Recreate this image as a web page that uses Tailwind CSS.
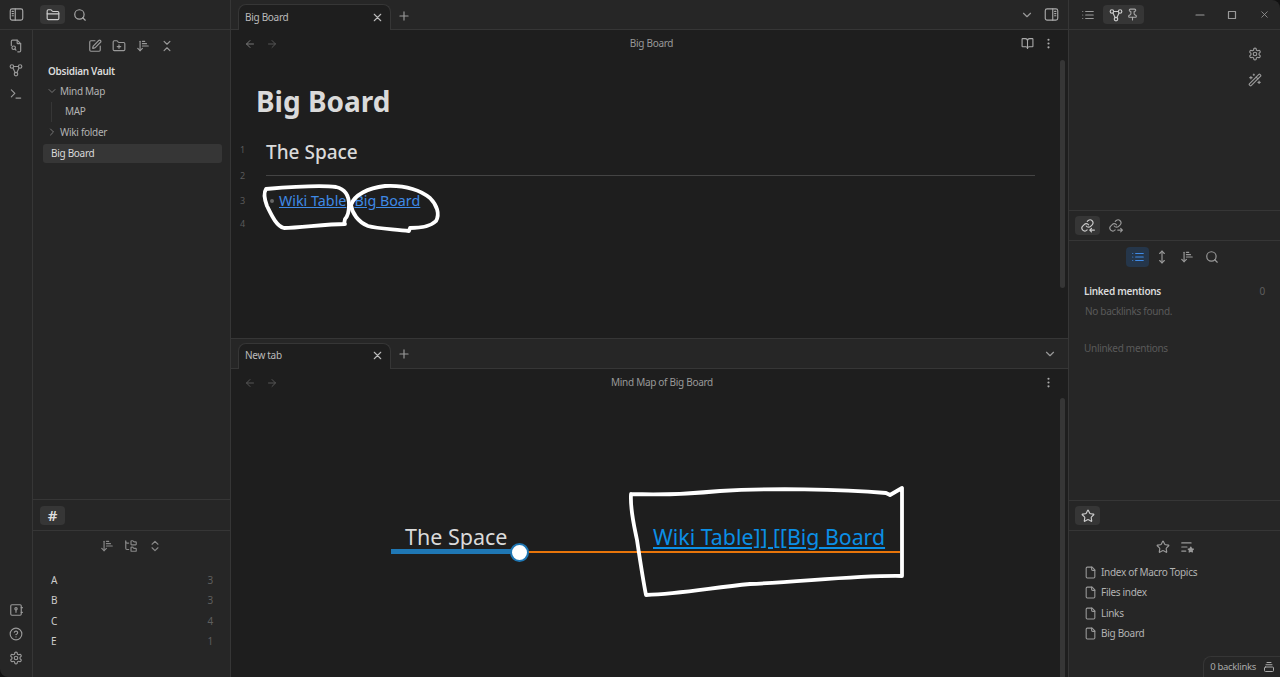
<!DOCTYPE html>
<html lang="en">
<head>
    <meta charset="UTF-8">
    <title>Big Board - Obsidian Vault</title>
    <script src="https://cdn.jsdelivr.net/npm/@tailwindcss/browser@4"></script>
</head>
<body class="bg-[#111] overflow-hidden font-['Noto_Sans','Open_Sans',sans-serif]">
    <svg class="hidden">
        <symbol id="i-sidebar" viewBox="0 0 24 24"><rect x="2" y="3" width="20" height="18" rx="3"/><path d="M10 3v18M5 7h2M5 10.500h2M5 14h2"/></symbol>
        <symbol id="i-sidebar-r" viewBox="0 0 24 24"><rect x="2" y="3" width="20" height="18" rx="3"/><path d="M14 3v18M17 7h2M17 10.500h2M17 14h2"/></symbol>
        <symbol id="i-folder" viewBox="0 0 24 24"><path d="M20 20a2 2 0 0 0 2-2V8a2 2 0 0 0-2-2h-7.900a2 2 0 0 1-1.690-.9L9.600 3.900A2 2 0 0 0 7.930 3H4a2 2 0 0 0-2 2v13a2 2 0 0 0 2 2Z"/><path d="M2 10h20"/></symbol>
        <symbol id="i-search" viewBox="0 0 24 24"><circle cx="11" cy="11" r="8"/><path d="m21 21-4.300-4.300"/></symbol>
        <symbol id="i-file-search" viewBox="0 0 24 24"><path d="M14 2v5a1 1 0 0 0 1 1h5"/><path d="M9 2h5l6 6v12a2 2 0 0 1-2 2h-3M4 11V4a2 2 0 0 1 2-2h3"/><circle cx="8" cy="15" r="3"/><path d="m12 19-1.800-1.800"/></symbol>
        <symbol id="i-graph" viewBox="0 0 24 24"><circle cx="5" cy="6" r="3"/><circle cx="19" cy="6" r="3"/><circle cx="12" cy="19" r="3"/><path d="M7 9l3.500 7.500M17 9l-3.500 7.500M8 6h8"/></symbol>
        <symbol id="i-terminal" viewBox="0 0 24 24"><path d="m4 17 6-6-6-6"/><path d="M12 19h8"/></symbol>
        <symbol id="i-pen" viewBox="0 0 24 24"><path d="M12 3H5a2 2 0 0 0-2 2v14a2 2 0 0 0 2 2h14a2 2 0 0 0 2-2v-7"/><path d="M18.375 2.625a1 1 0 0 1 3 3l-9.013 9.014a2 2 0 0 1-.853.505l-2.873.84a.5.5 0 0 1-.62-.62l.84-2.873a2 2 0 0 1 .506-.852z"/></symbol>
        <symbol id="i-folder-plus" viewBox="0 0 24 24"><path d="M12 10v6M9 13h6"/><path d="M20 20a2 2 0 0 0 2-2V8a2 2 0 0 0-2-2h-7.900a2 2 0 0 1-1.690-.9L9.600 3.900A2 2 0 0 0 7.930 3H4a2 2 0 0 0-2 2v13a2 2 0 0 0 2 2Z"/></symbol>
        <symbol id="i-sort" viewBox="0 0 24 24"><path d="m3 16 4 4 4-4"/><path d="M7 20V4"/><path d="M11 4h4M11 8h7M11 12h10"/></symbol>
        <symbol id="i-collapse" viewBox="0 0 24 24"><path d="m7 20 5-5 5 5"/><path d="m7 4 5 5 5-5"/></symbol>
        <symbol id="i-expand" viewBox="0 0 24 24"><path d="m7 15 5 5 5-5"/><path d="m7 9 5-5 5 5"/></symbol>
        <symbol id="i-folder-tree" viewBox="0 0 24 24"><path d="M20 10a1 1 0 0 0 1-1V6a1 1 0 0 0-1-1h-2.500a1 1 0 0 1-.8-.4l-.9-1.200A1 1 0 0 0 15 3h-2a1 1 0 0 0-1 1v5a1 1 0 0 0 1 1Z"/><path d="M20 21a1 1 0 0 0 1-1v-3a1 1 0 0 0-1-1h-2.900a1 1 0 0 1-.88-.55l-.42-.85a1 1 0 0 0-.92-.6H13a1 1 0 0 0-1 1v5a1 1 0 0 0 1 1Z"/><path d="M3 5a2 2 0 0 0 2 2h3"/><path d="M3 3v13a2 2 0 0 0 2 2h3"/></symbol>
        <symbol id="i-vault" viewBox="0 0 24 24"><rect x="3" y="3" width="18" height="18" rx="2"/><circle cx="12" cy="10" r="2"/><path d="M12 12v4M21 8h2M21 16h2"/></symbol>
        <symbol id="i-help" viewBox="0 0 24 24"><circle cx="12" cy="12" r="10"/><path d="M9.090 9a3 3 0 0 1 5.830 1c0 2-3 3-3 3"/><path d="M12 17h.01"/></symbol>
        <symbol id="i-gear" viewBox="0 0 24 24"><path d="M12.220 2h-.44a2 2 0 0 0-2 2v.18a2 2 0 0 1-1 1.730l-.43.25a2 2 0 0 1-2 0l-.15-.08a2 2 0 0 0-2.730.73l-.22.38a2 2 0 0 0 .73 2.730l.15.1a2 2 0 0 1 1 1.720v.51a2 2 0 0 1-1 1.740l-.15.09a2 2 0 0 0-.73 2.730l.22.38a2 2 0 0 0 2.730.73l.15-.08a2 2 0 0 1 2 0l.43.25a2 2 0 0 1 1 1.730V20a2 2 0 0 0 2 2h.44a2 2 0 0 0 2-2v-.18a2 2 0 0 1 1-1.730l.43-.25a2 2 0 0 1 2 0l.15.08a2 2 0 0 0 2.730-.73l.22-.39a2 2 0 0 0-.73-2.730l-.15-.08a2 2 0 0 1-1-1.740v-.5a2 2 0 0 1 1-1.740l.15-.09a2 2 0 0 0 .73-2.730l-.22-.38a2 2 0 0 0-2.730-.73l-.15.08a2 2 0 0 1-2 0l-.43-.25a2 2 0 0 1-1-1.730V4a2 2 0 0 0-2-2z"/><circle cx="12" cy="12" r="3"/></symbol>
        <symbol id="i-x" viewBox="0 0 24 24"><path d="M18 6 6 18M6 6l12 12"/></symbol>
        <symbol id="i-plus" viewBox="0 0 24 24"><path d="M5 12h14M12 5v14"/></symbol>
        <symbol id="i-left" viewBox="0 0 24 24"><path d="m12 19-7-7 7-7M19 12H5"/></symbol>
        <symbol id="i-right" viewBox="0 0 24 24"><path d="M5 12h14M12 5l7 7-7 7"/></symbol>
        <symbol id="i-chevron" viewBox="0 0 24 24"><path d="m6 9 6 6 6-6"/></symbol>
        <symbol id="i-chevron-r" viewBox="0 0 24 24"><path d="m9 18 6-6-6-6"/></symbol>
        <symbol id="i-book" viewBox="0 0 24 24"><path d="M12 7v14"/><path d="M3 18a1 1 0 0 1-1-1V4a1 1 0 0 1 1-1h5a4 4 0 0 1 4 4 4 4 0 0 1 4-4h5a1 1 0 0 1 1 1v13a1 1 0 0 1-1 1h-6a3 3 0 0 0-3 3 3 3 0 0 0-3-3z"/></symbol>
        <symbol id="i-more" viewBox="0 0 24 24"><circle cx="12" cy="5" r="1"/><circle cx="12" cy="12" r="1"/><circle cx="12" cy="19" r="1"/></symbol>
        <symbol id="i-list" viewBox="0 0 24 24"><path d="M3 6h.01M3 12h.01M3 18h.01M8 6h13M8 12h13M8 18h13"/></symbol>
        <symbol id="i-pin" viewBox="0 0 24 24"><path d="M12 17v5"/><path d="M9 10.760a2 2 0 0 1-1.110 1.790l-1.780.9A2 2 0 0 0 5 15.240V16a1 1 0 0 0 1 1h12a1 1 0 0 0 1-1v-.76a2 2 0 0 0-1.110-1.790l-1.780-.9A2 2 0 0 1 15 10.760V7a1 1 0 0 1 1-1 2 2 0 0 0 0-4H8a2 2 0 0 0 0 4 1 1 0 0 1 1 1z"/></symbol>
        <symbol id="i-wand" viewBox="0 0 24 24"><path d="m21.640 3.640-1.280-1.280a1.210 1.210 0 0 0-1.720 0L2.360 18.640a1.210 1.210 0 0 0 0 1.720l1.280 1.280a1.200 1.200 0 0 0 1.720 0L21.640 5.360a1.200 1.200 0 0 0 0-1.720"/><path d="m14 7 3 3M5 6v4M19 14v4M10 2v2M7 8H3M21 16h-4M11 3H9"/></symbol>
        <symbol id="i-link-in" viewBox="0 0 24 24"><path d="M9 12a5 5 0 0 0 7.500.5l3-3a5 5 0 0 0-7-7l-1.700 1.700"/><path d="M13 10a5 5 0 0 0-7.500-.5l-3 3a5 5 0 0 0 7 7l1-1"/><path d="M23 19h-8M18 16l-3 3 3 3"/></symbol>
        <symbol id="i-link-out" viewBox="0 0 24 24"><path d="M9 12a5 5 0 0 0 7.500.5l3-3a5 5 0 0 0-7-7l-1.700 1.700"/><path d="M13 10a5 5 0 0 0-7.500-.5l-3 3a5 5 0 0 0 7 7l1-1"/><path d="M15 19h8M20 16l3 3-3 3"/></symbol>
        <symbol id="i-move" viewBox="0 0 24 24"><path d="M12 2v20"/><path d="m8 18 4 4 4-4"/><path d="m8 6 4-4 4 4"/></symbol>
        <symbol id="i-star" viewBox="0 0 24 24"><path d="M11.525 2.295a.53.53 0 0 1 .95 0l2.310 4.679a2.123 2.123 0 0 0 1.595 1.160l5.166.756a.53.53 0 0 1 .294.904l-3.736 3.638a2.123 2.123 0 0 0-.611 1.878l.882 5.140a.53.53 0 0 1-.771.56l-4.618-2.428a2.122 2.122 0 0 0-1.973 0L6.396 21.010a.53.53 0 0 1-.77-.56l.881-5.139a2.122 2.122 0 0 0-.611-1.879L2.160 9.795a.53.53 0 0 1 .294-.906l5.165-.755a2.122 2.122 0 0 0 1.597-1.160z"/></symbol>
        <symbol id="i-list-star" viewBox="0 0 24 24"><path d="M3 5h16M3 12h9M3 19h7"/><path d="m18.500 12 1.500 3 3 .5-2.200 2.100.5 3-2.800-1.500-2.800 1.500.5-3-2.200-2.100 3-.5z" fill="currentColor"/></symbol>
        <symbol id="i-file" viewBox="0 0 24 24"><path d="M15 2H6a2 2 0 0 0-2 2v16a2 2 0 0 0 2 2h12a2 2 0 0 0 2-2V7Z"/><path d="M14 2v4a2 2 0 0 0 2 2h4"/></symbol>
        <symbol id="i-stack" viewBox="0 0 24 24"><rect x="3" y="12" width="18" height="9" rx="2"/><path d="M6 7.500h12M8 3h8"/></symbol>
    </svg>

    <div class="relative flex w-[1280px] h-[677px] overflow-hidden rounded-tr-lg rounded-bl-lg bg-[#262626] text-[10px] tracking-[-0.3px] text-[#b3b3b3] [stroke-linecap:round] [stroke-linejoin:round]">

        <!-- left: ribbon and files -->
        <div class="flex flex-col w-[231px] shrink-0 border-r border-[#363636]">
            <div class="flex items-center h-[30px] shrink-0 border-b border-[#363636] pl-[9px]">
                <svg class="w-[15px] h-[15px] text-[#aaa] fill-none stroke-current stroke-[1.800]"><use href="#i-sidebar"/></svg>
                <div class="flex items-center justify-center w-[25px] h-[19px] ml-[16px] rounded bg-[#363636]">
                    <svg class="w-[14px] h-[14px] text-[#ccc] fill-none stroke-current stroke-2"><use href="#i-folder"/></svg>
                </div>
                <svg class="w-[14px] h-[14px] ml-[8px] text-[#aaa] fill-none stroke-current stroke-2"><use href="#i-search"/></svg>
            </div>
            <div class="flex flex-1 min-h-0">
                <div class="flex flex-col items-center w-[33px] shrink-0 border-r border-[#363636] pt-[9px] pb-[12px] text-[#999]">
                    <svg class="w-[14px] h-[14px] mb-[10px] fill-none stroke-current stroke-2"><use href="#i-file-search"/></svg>
                    <svg class="w-[14px] h-[14px] mb-[10px] fill-none stroke-current stroke-2"><use href="#i-graph"/></svg>
                    <svg class="w-[14px] h-[14px] fill-none stroke-current stroke-2"><use href="#i-terminal"/></svg>
                    <div class="flex-1"></div>
                    <svg class="w-[14px] h-[14px] mb-[10px] fill-none stroke-current stroke-2"><use href="#i-vault"/></svg>
                    <svg class="w-[14px] h-[14px] mb-[10px] fill-none stroke-current stroke-2"><use href="#i-help"/></svg>
                    <svg class="w-[14px] h-[14px] fill-none stroke-current stroke-2"><use href="#i-gear"/></svg>
                </div>
                <div class="flex flex-col flex-1 min-w-0">
                    <div class="h-[470px] shrink-0 border-b border-[#363636]">
                        <div class="flex items-center justify-center gap-[10px] h-[32px] pr-[2px] text-[#999]">
                            <svg class="w-[14px] h-[14px] fill-none stroke-current stroke-2"><use href="#i-pen"/></svg>
                            <svg class="w-[14px] h-[14px] fill-none stroke-current stroke-2"><use href="#i-folder-plus"/></svg>
                            <svg class="w-[14px] h-[14px] fill-none stroke-current stroke-2"><use href="#i-sort"/></svg>
                            <svg class="w-[14px] h-[14px] fill-none stroke-current stroke-2"><use href="#i-collapse"/></svg>
                        </div>
                        <div class="flex items-center h-[19px] pl-[15px] font-semibold text-[#dadada]">Obsidian Vault</div>
                        <div class="flex items-center h-[20.500px] pl-[13px]"><svg class="w-[12px] h-[12px] mr-[2px] text-[#777] fill-none stroke-current stroke-2"><use href="#i-chevron"/></svg>Mind Map</div>
                        <div class="flex items-center h-[20.500px] ml-[18px] pl-[13px]"><span class="flex items-center h-full -ml-[13px] pl-[13px] border-l border-[#363636]">MAP</span></div>
                        <div class="flex items-center h-[20.500px] pl-[13px]"><svg class="w-[12px] h-[12px] mr-[2px] text-[#777] fill-none stroke-current stroke-2"><use href="#i-chevron-r"/></svg>Wiki folder</div>
                        <div class="flex items-center h-[19px] mt-[1px] ml-[10px] mr-[8px] pl-[8px] rounded-[3px] bg-[#363636] text-[#dadada]">Big Board</div>
                    </div>
                    <div class="flex items-center h-[31px] shrink-0 border-b border-[#363636] pl-[7px]">
                        <div class="flex items-center justify-center w-[25px] h-[19px] rounded bg-[#363636]">
                            <span class="text-[15px] leading-none font-semibold text-[#ddd]">#</span>
                        </div>
                    </div>
                    <div class="flex items-center justify-center gap-[10px] h-[30px] pr-[1px] text-[#888]">
                        <svg class="w-[14px] h-[14px] fill-none stroke-current stroke-2"><use href="#i-sort"/></svg>
                        <svg class="w-[14px] h-[14px] fill-none stroke-current stroke-2"><use href="#i-folder-tree"/></svg>
                        <svg class="w-[14px] h-[14px] fill-none stroke-current stroke-2"><use href="#i-expand"/></svg>
                    </div>
                    <div class="mt-[9px] pl-[18px] pr-[17px] text-[#ccc]">
                        <div class="flex items-center justify-between h-[20.500px]"><span>A</span><span class="text-[#5e5e5e]">3</span></div>
                        <div class="flex items-center justify-between h-[20.500px]"><span>B</span><span class="text-[#5e5e5e]">3</span></div>
                        <div class="flex items-center justify-between h-[20.500px]"><span>C</span><span class="text-[#5e5e5e]">4</span></div>
                        <div class="flex items-center justify-between h-[20.500px]"><span>E</span><span class="text-[#5e5e5e]">1</span></div>
                    </div>
                </div>
            </div>
        </div>

        <!-- main panes -->
        <div class="flex flex-col w-[838px] shrink-0 bg-[#1e1e1e] border-r border-[#363636]">
            <div class="relative h-[339px] shrink-0 border-b border-[#363636]">
                <div class="flex items-end h-[30px] bg-[#262626] border-b border-[#363636] pl-[7px]">
                    <div class="flex items-center justify-between w-[153px] h-[26px] -mb-px pl-[6px] pr-[6px] pb-[1px] bg-[#1e1e1e] border border-b-0 border-[#363636] rounded-t-lg text-[#bbb]">
                        <span>Big Board</span>
                        <svg class="w-[13px] h-[13px] text-[#bbb] fill-none stroke-current stroke-2"><use href="#i-x"/></svg>
                    </div>
                    <svg class="w-[14px] h-[14px] ml-[6px] mb-[6px] text-[#999] fill-none stroke-current stroke-2"><use href="#i-plus"/></svg>
                    <div class="flex-1"></div>
                    <svg class="w-[14px] h-[14px] mb-[7px] mr-[10px] text-[#999] fill-none stroke-current stroke-2"><use href="#i-chevron"/></svg>
                    <svg class="w-[15px] h-[15px] mb-[7px] mr-[9px] text-[#aaa] fill-none stroke-current stroke-[1.800]"><use href="#i-sidebar-r"/></svg>
                </div>
                <div class="flex items-center h-[27px] pl-[13px] pr-[13px]">
                    <svg class="w-[12px] h-[12px] text-[#777] fill-none stroke-current stroke-2"><use href="#i-left"/></svg>
                    <svg class="w-[12px] h-[12px] ml-[10px] text-[#555] fill-none stroke-current stroke-2"><use href="#i-right"/></svg>
                    <span class="flex-1 text-center text-[#999] pl-[4px]">Big Board</span>
                    <svg class="w-[13px] h-[13px] text-[#aaa] fill-none stroke-current stroke-2"><use href="#i-book"/></svg>
                    <svg class="w-[13px] h-[13px] ml-[8px] text-[#aaa] fill-none stroke-current stroke-2"><use href="#i-more"/></svg>
                </div>
                <div class="pl-[25px] mt-[22px] text-[28px] tracking-normal leading-[44px] font-bold text-[#dadada]">Big Board</div>
                <div class="flex items-center mt-[15px] h-[26px]">
                    <span class="w-[35px] pl-[9px] pb-[3px] text-[9px] text-[#5a5a5a]">1</span>
                    <span class="pt-[2px] text-[19px] tracking-normal font-medium text-[#dadada]">The Space</span>
                </div>
                <div class="flex items-center h-[25px]">
                    <span class="w-[35px] pl-[9px] pb-[1px] text-[9px] text-[#5a5a5a]">2</span>
                    <div class="w-[769px] h-px -mt-[2px] bg-[#444]"></div>
                </div>
                <div class="flex items-center h-[24px]">
                    <span class="w-[35px] pl-[9px] pb-[1px] text-[9px] text-[#5a5a5a]">3</span>
                    <span class="w-[4px] h-[4px] ml-[4px] mr-[5px] rounded-full bg-[#666]"></span>
                    <a class="text-[14.300px] tracking-normal text-[#3f8ae6] underline">Wiki Table</a>
                    <a class="ml-[8px] text-[14.300px] tracking-normal text-[#3f8ae6] underline">Big Board</a>
                </div>
                <div class="flex items-center h-[22px]">
                    <span class="w-[35px] pl-[9px] text-[9px] text-[#5a5a5a]">4</span>
                </div>
                <div class="absolute right-[3px] top-[60px] w-[5px] h-[228px] rounded bg-[#363636]"></div>
            </div>

            <div class="relative flex-1 min-h-0">
                <div class="flex items-end h-[30px] bg-[#262626] border-b border-[#363636] pl-[7px]">
                    <div class="flex items-center justify-between w-[153px] h-[26px] -mb-px pl-[6px] pr-[6px] pb-[2px] bg-[#1e1e1e] border border-b-0 border-[#363636] rounded-t-lg text-[#bbb]">
                        <span>New tab</span>
                        <svg class="w-[13px] h-[13px] text-[#bbb] fill-none stroke-current stroke-2"><use href="#i-x"/></svg>
                    </div>
                    <svg class="w-[14px] h-[14px] ml-[6px] mb-[7px] text-[#999] fill-none stroke-current stroke-2"><use href="#i-plus"/></svg>
                    <div class="flex-1"></div>
                    <svg class="w-[14px] h-[14px] mb-[7px] mr-[11px] text-[#999] fill-none stroke-current stroke-2"><use href="#i-chevron"/></svg>
                </div>
                <div class="flex items-center h-[27px] pl-[13px] pr-[13px]">
                    <svg class="w-[12px] h-[12px] text-[#555] fill-none stroke-current stroke-2"><use href="#i-left"/></svg>
                    <svg class="w-[12px] h-[12px] ml-[10px] text-[#555] fill-none stroke-current stroke-2"><use href="#i-right"/></svg>
                    <span class="flex-1 text-center text-[#999] pl-[4px]">Mind Map of Big Board</span>
                    <svg class="w-[13px] h-[13px] text-[#aaa] fill-none stroke-current stroke-2"><use href="#i-more"/></svg>
                </div>
                <div class="absolute right-[3px] top-[59px] w-[5px] h-[279px] rounded-t bg-[#363636]"></div>

                <!-- mind map canvas -->
                <span class="absolute left-[174px] top-[181px] text-[21.500px] tracking-normal leading-[34px] text-[#dadada] whitespace-nowrap">The Space</span>
                <a class="absolute left-[422px] top-[181px] text-[21.300px] tracking-normal leading-[34px] text-[#0b8fe6] underline whitespace-nowrap">Wiki Table]] [[Big Board</a>
                <div class="absolute left-[160px] top-[210px] w-[128px] h-[5px] bg-[#1f77b4]"></div>
                <div class="absolute left-[297px] top-[212px] w-[372px] h-[2px] bg-[#e8750a]"></div>
                <div class="absolute left-[279px] top-[204px] w-[19px] h-[19px] rounded-full bg-white border-[2.500px] border-[#1f77b4]"></div>
            </div>
        </div>

        <!-- right sidebar -->
        <div class="relative flex flex-col flex-1 min-w-0">
            <div class="flex items-center h-[30px] shrink-0 border-b border-[#363636] pl-[12px]">
                <svg class="w-[14px] h-[14px] text-[#999] fill-none stroke-current stroke-2"><use href="#i-list"/></svg>
                <div class="flex items-center justify-center gap-[3px] w-[41px] h-[19px] ml-[8px] rounded bg-[#363636] text-[#ccc]">
                    <svg class="w-[14px] h-[14px] fill-none stroke-current stroke-2"><use href="#i-graph"/></svg>
                    <svg class="w-[13px] h-[13px] text-[#aaa] fill-none stroke-current stroke-2"><use href="#i-pin"/></svg>
                </div>
                <div class="flex-1"></div>
                <svg class="w-[10px] h-[10px] mr-[22px] text-[#999] fill-none stroke-current stroke-[1.200]"><path d="M1 5h8"/></svg>
                <svg class="w-[10px] h-[10px] mr-[22px] text-[#999] fill-none stroke-current stroke-[1.200]"><rect x="1.500" y="1.500" width="7" height="7"/></svg>
                <svg class="w-[11px] h-[11px] mr-[10px] text-[#999] fill-none stroke-current stroke-[1.800]"><use href="#i-x"/></svg>
            </div>
            <div class="flex flex-col items-end gap-[12px] h-[181px] shrink-0 border-b border-[#363636] pt-[17px] pr-[18px] text-[#999]">
                <svg class="w-[14px] h-[14px] fill-none stroke-current stroke-2"><use href="#i-gear"/></svg>
                <svg class="w-[14px] h-[14px] fill-none stroke-current stroke-2"><use href="#i-wand"/></svg>
            </div>
            <div class="flex items-center h-[30px] shrink-0 border-b border-[#363636] pl-[6px]">
                <div class="flex items-center justify-center w-[25px] h-[19px] rounded bg-[#363636] text-[#ccc]">
                    <svg class="w-[14px] h-[14px] fill-none stroke-current stroke-2"><use href="#i-link-in"/></svg>
                </div>
                <svg class="w-[14px] h-[14px] ml-[9px] text-[#999] fill-none stroke-current stroke-2"><use href="#i-link-out"/></svg>
            </div>
            <div class="h-[260px] shrink-0 border-b border-[#363636]">
                <div class="flex items-center justify-center gap-[1px] h-[32px] pl-[1px] text-[#999]">
                    <div class="flex items-center justify-center w-[23px] h-[20px] rounded bg-[#25364a] text-[#3f8ae6]">
                        <svg class="w-[14px] h-[14px] fill-none stroke-current stroke-2"><use href="#i-list"/></svg>
                    </div>
                    <div class="flex items-center justify-center w-[24px]"><svg class="w-[14px] h-[14px] fill-none stroke-current stroke-2"><use href="#i-move"/></svg></div>
                    <div class="flex items-center justify-center w-[24px]"><svg class="w-[14px] h-[14px] fill-none stroke-current stroke-2"><use href="#i-sort"/></svg></div>
                    <div class="flex items-center justify-center w-[24px]"><svg class="w-[14px] h-[14px] fill-none stroke-current stroke-2"><use href="#i-search"/></svg></div>
                </div>
                <div class="flex items-center justify-between h-[16px] mt-[10px] pl-[15px] pr-[15px]">
                    <span class="font-semibold text-[#dadada]">Linked mentions</span>
                    <span class="text-[#5e5e5e]">0</span>
                </div>
                <div class="h-[16px] mt-[4px] pl-[16px] leading-[16px] text-[#5a5a5a]">No backlinks found.</div>
                <div class="h-[16px] mt-[21px] pl-[15px] leading-[16px] text-[#5a5a5a]">Unlinked mentions</div>
            </div>
            <div class="flex items-center h-[30px] shrink-0 border-b border-[#363636] pl-[6px]">
                <div class="flex items-center justify-center w-[25px] h-[19px] rounded bg-[#363636] text-[#ccc]">
                    <svg class="w-[14px] h-[14px] fill-none stroke-current stroke-2"><use href="#i-star"/></svg>
                </div>
            </div>
            <div class="flex items-center justify-center gap-[10px] h-[32px] shrink-0 text-[#999]">
                <svg class="w-[14px] h-[14px] fill-none stroke-current stroke-2"><use href="#i-star"/></svg>
                <svg class="w-[14px] h-[14px] fill-none stroke-current stroke-2"><use href="#i-list-star"/></svg>
            </div>
            <div class="-mt-[1px] pl-[15px]">
                <div class="flex items-center h-[20.500px]"><svg class="w-[13px] h-[13px] mr-[4px] text-[#999] fill-none stroke-current stroke-2"><use href="#i-file"/></svg>Index of Macro Topics</div>
                <div class="flex items-center h-[20.500px]"><svg class="w-[13px] h-[13px] mr-[4px] text-[#999] fill-none stroke-current stroke-2"><use href="#i-file"/></svg>Files index</div>
                <div class="flex items-center h-[20.500px]"><svg class="w-[13px] h-[13px] mr-[4px] text-[#999] fill-none stroke-current stroke-2"><use href="#i-file"/></svg>Links</div>
                <div class="flex items-center h-[20.500px]"><svg class="w-[13px] h-[13px] mr-[4px] text-[#999] fill-none stroke-current stroke-2"><use href="#i-file"/></svg>Big Board</div>
            </div>
            <div class="absolute right-0 bottom-0 flex items-center gap-[7px] h-[21px] pl-[6px] pr-[5px] border-t border-l border-[#363636] rounded-tl-lg bg-[#262626] text-[9.500px] text-[#aaa]">
                <span>0 backlinks</span>
                <svg class="w-[12px] h-[12px] fill-none stroke-current stroke-2"><use href="#i-stack"/></svg>
            </div>
        </div>

        <!-- hand-drawn marks over the screenshot -->
        <svg class="absolute left-0 top-0 w-[1280px] h-[677px] pointer-events-none text-white fill-none stroke-current stroke-[3.800]" viewBox="0 0 1280 677">
            <path d="M345 224 C325 224 300 228 284 228 C276 226 271 214 267 206 C264 198 264 192 266 189 C290 187 320 185 336 187 C345 189 349 195 349 205 C349 213 347 217 345 219 L344 224"/>
            <path d="M351 205 C354 195 368 188 385 186 C405 185 420 190 430 198 C437 205 440 214 436 221 C430 227 418 228 410 228 L409 231 C395 229 378 229 368 226 C358 222 352 213 351 205"/>
            <path d="M631 494 C660 495 690 494 720 491 C770 488 840 489 886 493 L890 495 L902 488 L902 576 C860 575 800 582 750 584 C710 588 680 594 646 595 C643 580 640 560 637 540 C634 525 630 510 631 494"/>
        </svg>
    </div>
</body>
</html>
